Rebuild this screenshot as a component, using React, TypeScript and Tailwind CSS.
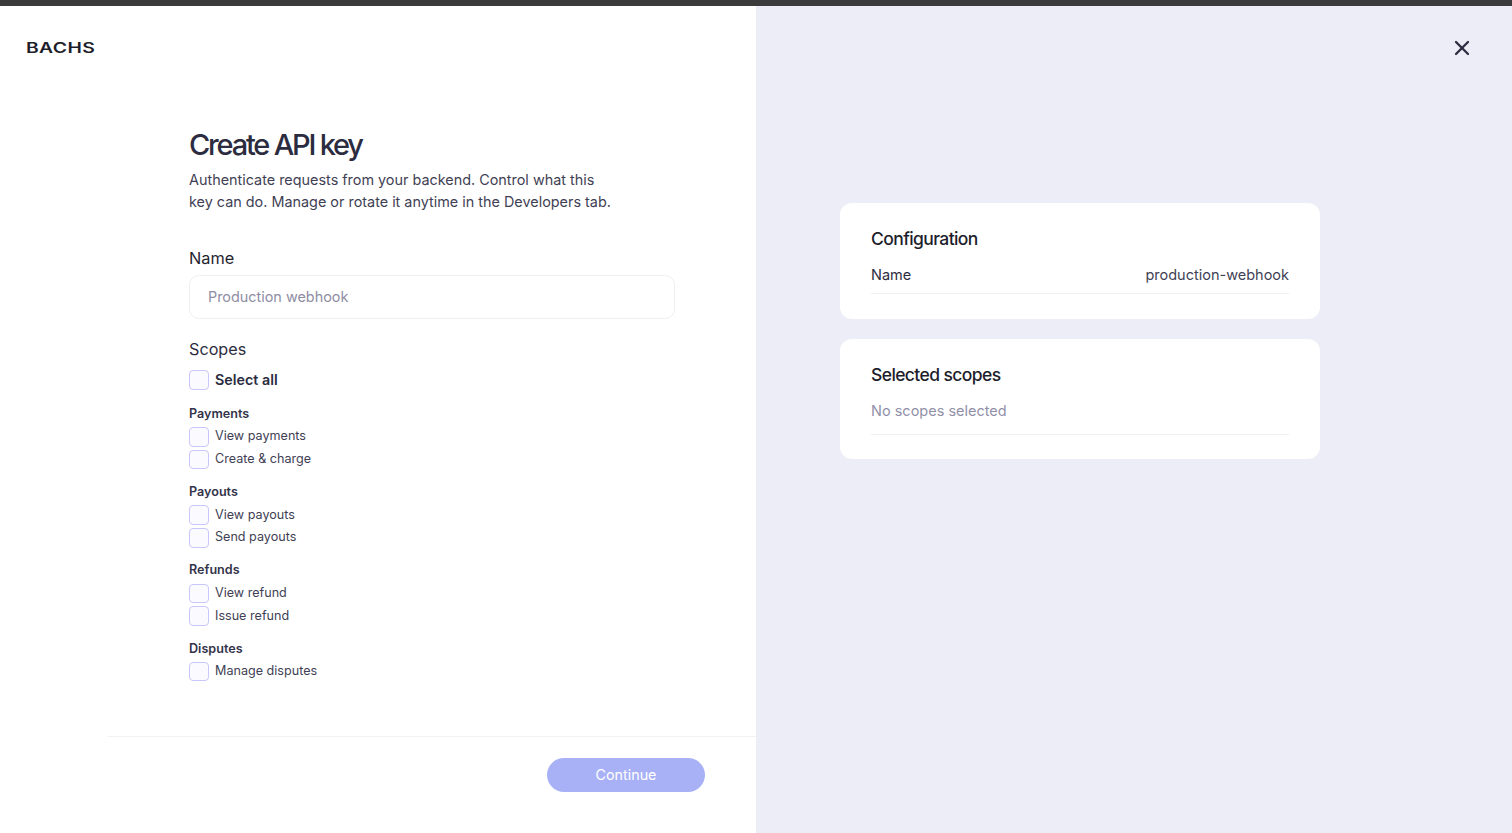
import React from 'react';
import { X } from 'lucide-react';

const groups = [
  { title: 'Payments', items: ['View payments', 'Create & charge'] },
  { title: 'Payouts', items: ['View payouts', 'Send payouts'] },
  { title: 'Refunds', items: ['View refund', 'Issue refund'] },
  { title: 'Disputes', items: ['Manage disputes'] },
];

const Box = () => (
  <span className="block w-[19.5px] h-[19.5px] shrink-0 rounded-[4px] border border-[#c9c6fb] bg-[#fbfbff]" />
);

const Check = ({ label }: { label: string }) => (
  <label className="flex items-center gap-[6.5px] h-[22.75px] text-[12.6px] text-[#3f3f55]">
    <Box />
    {label}
  </label>
);

export default function App() {
  return (
    <div className="h-[833px] flex flex-col overflow-hidden bg-white text-[#2c2c40] font-['Inter',sans-serif]">
      <div className="h-[6px] shrink-0 bg-[#3b3b3b]" />
      <div className="flex flex-1 min-h-0">
        <div className="w-[756px] shrink-0 flex flex-col">
          <div className="h-[84px] pt-[33px] pl-[26px] shrink-0">
            <span className="block origin-left scale-x-[1.38] text-[14px] leading-[18px] font-semibold tracking-[0.02em] text-[#1d1d2b]">BACHS</span>
          </div>
          <div className="flex-1 pl-[189px] pt-[37px]">
            <h1 className="text-[29px] leading-[36px] font-[450] tracking-[-2.2px] text-[#2c2c40]">Create API key</h1>
            <p className="mt-[6px] text-[14.4px] leading-[21.5px] text-[#3f3f55]">
              Authenticate requests from your backend. Control what this<br />
              key can do. Manage or rotate it anytime in the Developers tab.
            </p>
            <div className="mt-[34px] text-[16.3px] leading-[24px] text-[#1f1f2e]">Name</div>
            <div className="mt-[5px] w-[486px] h-[44px] flex items-center px-[18px] rounded-[10px] border border-[#efeff3] text-[14.4px] text-[#8e8da3]">
              Production webhook
            </div>
            <div className="mt-[18px] text-[16.2px] leading-[24px] text-[#2c2c40]">Scopes</div>
            <label className="mt-[8px] flex items-center gap-[6.5px] h-[22px] text-[14.3px] font-semibold text-[#2c2c40]">
              <Box />
              Select all
            </label>
            <div className="mt-[11px] flex flex-col gap-[9.2px]">
              {groups.map((g) => (
                <div key={g.title}>
                  <div className="text-[12.6px] leading-[23.5px] font-semibold text-[#33334a]">{g.title}</div>
                  {g.items.map((i) => (
                    <Check key={i} label={i} />
                  ))}
                </div>
              ))}
            </div>
          </div>
          <div className="ml-[108px] h-[97px] shrink-0 border-t border-[#f2f2f5] pt-[21px] pl-[439px]">
            <button className="w-[158px] h-[34px] rounded-full bg-[#a8b1f6] text-[14.3px] text-white">Continue</button>
          </div>
        </div>
        <div className="relative flex-1 bg-[#ecedf6] pl-[84px] pt-[197px]">
          <button className="absolute top-[30px] right-[38px] text-[#2c2c40]">
            <X size={24} strokeWidth={2.25} />
          </button>
          <div className="w-[480px] h-[116px] rounded-[12px] bg-white px-[31px] pt-[23px]">
            <h2 className="text-[17.5px] leading-[26px] font-[450] tracking-[-0.6px] text-[#1d1d2b]">Configuration</h2>
            <div className="mt-[11px] h-[31px] flex items-start justify-between border-b border-[#f0f0f4] text-[14.5px] leading-[24px]">
              <span className="text-[#2c2c40]">Name</span>
              <span className="text-[#3f3f55]">production-webhook</span>
            </div>
          </div>
          <div className="mt-[20px] w-[480px] h-[120px] rounded-[12px] bg-white px-[31px] pt-[23px]">
            <h2 className="text-[17.5px] leading-[26px] font-[450] tracking-[-0.6px] text-[#1d1d2b]">Selected scopes</h2>
            <div className="mt-[11px] h-[36px] border-b border-[#f0f0f4] text-[14.5px] leading-[24px] text-[#9190a8]">No scopes selected</div>
          </div>
        </div>
      </div>
    </div>
  );
}
